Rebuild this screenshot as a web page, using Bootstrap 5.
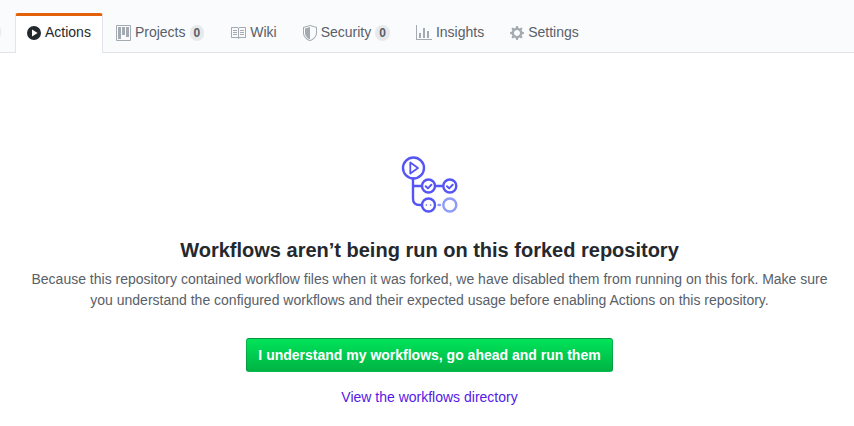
<!DOCTYPE html>
<html lang="en"><head><meta charset="utf-8"><title>Actions</title>
<link href="https://cdn.jsdelivr.net/npm/bootstrap@5.3.0/dist/css/bootstrap.min.css" rel="stylesheet">
<style>
html,body{height:426px;overflow:hidden}
body{font-family:"Liberation Sans",Arial,sans-serif;font-size:14px;line-height:1.5;color:#24292e;background:#fff}
.repo-head{height:53px;background:#fafbfc;border-bottom:1px solid #e1e4e8;padding-left:15px;padding-top:13px}
.repo-tab{height:40px;display:flex;align-items:center;gap:4px;padding:0 13px 1px 13px;color:#586069;text-decoration:none;white-space:nowrap}
.repo-tab svg{fill:#a3aab1;flex:none}
.repo-tab.on{background:#fff;color:#24292e;border:1px solid #e1e4e8;border-top:3px solid #e36209;border-bottom:0;border-radius:3px 3px 0 0;padding:0 11px 4px 11px;height:40px}
.repo-tab.on svg{fill:#24292e}
.cnt{font-size:12px;font-weight:700;line-height:1;padding:2px 4px;border-radius:20px;background:rgba(27,31,35,.08);color:#586069}
.cnt-cut{width:14px;height:16px;margin:11px 14px 0 -28px;flex:none;padding:0}
.hero{padding-top:103px;padding-left:5px;text-align:center}
.hero-title{font-size:20px;font-weight:700;line-height:30px;margin:19px 0 4px;color:#24292e}
.hero-text{color:#586069;line-height:21px;margin:0;padding:0 20px}
.go-btn{margin-top:27px;height:34px;width:367px;font-size:14px;font-weight:700;color:#fff;border:1px solid rgba(27,31,35,.2);border-radius:3px;background:linear-gradient(#00e35a,#00b344);padding:0;line-height:30px;display:inline-block}
.dir-link{display:block;margin-top:15px;color:#5319e7;text-decoration:none}
</style></head><body>
<nav class="repo-head d-flex align-items-start">
<span class="cnt cnt-cut"></span>
<a class="repo-tab on" href="#"><svg width="14" height="16" viewBox="0 0 14 16"><path fill-rule="evenodd" d="M7 1a7 7 0 1 1 0 14A7 7 0 0 1 7 1zM5 4.600v6.800L10.600 8z"/></svg>Actions</a>
<a class="repo-tab" href="#"><svg width="15" height="16" viewBox="0 0 15 16"><path fill-rule="evenodd" d="M10 12h3V2h-3v10zm-4-2h3V2H6v8zm-4 4h3V2H2v12zm-1 1h13V1H1v14zM14 0H1a1 1 0 0 0-1 1v14a1 1 0 0 0 1 1h13a1 1 0 0 0 1-1V1a1 1 0 0 0-1-1z"/></svg>Projects<span class="cnt">0</span></a>
<a class="repo-tab" href="#"><svg width="16" height="16" viewBox="0 0 16 16"><path fill-rule="evenodd" d="M3 5h4v1H3V5zm0 3h4V7H3v1zm0 2h4V9H3v1zm11-5h-4v1h4V5zm0 2h-4v1h4V7zm0 2h-4v1h4V9zm2-6v9c0 .55-.45 1-1 1H9.500l-1 1-1-1H2c-.55 0-1-.45-1-1V3c0-.55.45-1 1-1h5.500l1 1 1-1H15c.55 0 1 .45 1 1zm-8 .5L7.500 3H2v9h6V3.500zm7-.5H9.500l-.5.5V12h6V3z"/></svg>Wiki</a>
<a class="repo-tab" href="#"><svg width="14" height="16" viewBox="0 0 14 16"><path fill-rule="evenodd" d="M0 2l7-2 7 2v6.020C14 12.690 8.690 16 7 16c-1.690 0-7-3.310-7-7.980V2zm1 .75L7 1l6 1.750v5.268C13 12.104 8.449 15 7 15c-1.449 0-6-2.896-6-6.982V2.750zm1 .75L7 2v12c-1.207 0-5-2.413-5-5.818V3.500z"/></svg>Security<span class="cnt">0</span></a>
<a class="repo-tab" href="#"><svg width="16" height="16" viewBox="0 0 16 16"><path fill-rule="evenodd" d="M16 14v1H0V0h1v14h15zM5 13H3V8h2v5zm4 0H7V3h2v10zm4 0h-2V6h2v7z"/></svg>Insights</a>
<a class="repo-tab" href="#"><svg width="14" height="16" viewBox="0 0 14 16"><path fill-rule="evenodd" d="M14 8.770v-1.600l-1.940-.64-.45-1.090.88-1.840-1.130-1.130-1.810.91-1.090-.45-.69-1.920h-1.600l-.63 1.940-1.110.45-1.840-.88-1.130 1.130.91 1.810-.45 1.090L0 7.230v1.590l1.940.64.45 1.090-.88 1.840 1.130 1.130 1.810-.91 1.090.45.69 1.920h1.590l.63-1.940 1.110-.45 1.840.88 1.130-1.130-.92-1.810.47-1.090L14 8.750v.02zM7 11c-1.660 0-3-1.340-3-3s1.340-3 3-3 3 1.340 3 3-1.340 3-3 3z"/></svg>Settings</a>
</nav>
<main class="hero">
<svg width="60" height="60" viewBox="0 0 60 60" fill="none" stroke="#5555f5" stroke-width="2.400" stroke-linecap="round" stroke-linejoin="round" class="d-block mx-auto">
<circle cx="13.500" cy="12" r="10.500"/><path stroke-width="1.800" d="M10.300 6.500v11l7.700-5.500z"/>
<path d="M13 22.500v20q0 6.500 6.500 6.500h2.500M13 30h8.500"/>
<circle cx="28.500" cy="30" r="6.500"/><path stroke-width="2" d="M25.700 30.200l2.200 2.200 3.500-3.600"/><path d="M35 30h8"/>
<circle cx="49.800" cy="30" r="6.500"/><path stroke-width="2" d="M47 30.200l2.200 2.200 3.500-3.600"/>
<circle cx="28.500" cy="49" r="6.500"/><path stroke-width="1.500" d="M26.300 49h.01M30.700 49h.01"/>
<path d="M38.500 49h1.500" stroke="#8f9cf7"/><circle cx="49.800" cy="49" r="6.500" stroke="#8f9cf7"/>
</svg>
<h1 class="hero-title">Workflows aren’t being run on this forked repository</h1>
<p class="hero-text">Because this repository contained workflow files when it was forked, we have disabled them from running on this fork. Make sure you understand the configured workflows and their expected usage before enabling Actions on this repository.</p>
<button type="button" class="btn go-btn">I understand my workflows, go ahead and run them</button>
<a class="dir-link" href="#">View the workflows directory</a>
</main>
<script src="https://cdn.jsdelivr.net/npm/bootstrap@5.3.0/dist/js/bootstrap.bundle.min.js"></script>
</body></html>
